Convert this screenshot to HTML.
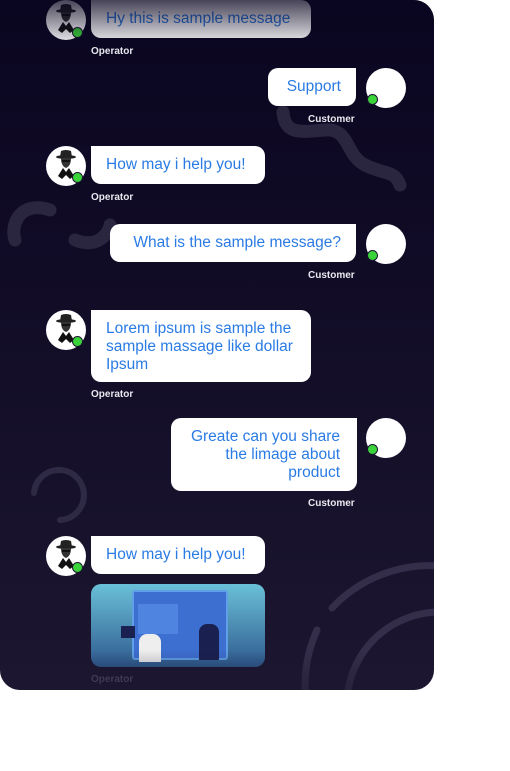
<!DOCTYPE html>
<html><head><meta charset="utf-8"><style>
*{margin:0;padding:0;box-sizing:border-box}
body{width:510px;height:771px;background:#fff;position:relative;overflow:hidden;font-family:"Liberation Sans",sans-serif}
.panel{position:absolute;left:0;top:0;width:434px;height:690px;border-radius:0 20px 20px 20px;background:linear-gradient(#0a0520,#1c1630);overflow:hidden}
.b{position:absolute;background:#fff;color:#2a7be4;font-size:15.5px;line-height:18px;padding:10px 15px;border-radius:10px;white-space:nowrap}
.op{border-top-left-radius:0}
.cu{border-top-right-radius:0;text-align:right}
.av{position:absolute;width:40px;height:40px;border-radius:50%;background:#fff;overflow:hidden}
.dot{position:absolute;width:11px;height:11px;border-radius:50%;background:#3ad33a;border:1.5px solid #1a1530}
.lb{position:absolute;color:#e8e8ee;font-size:10px;font-weight:bold}
</style></head><body>
<svg width="0" height="0" style="position:absolute"><defs>
<symbol id="man" viewBox="0 0 40 40">
<ellipse cx="20" cy="11" rx="10" ry="2" fill="#222"/>
<path d="M14 11 L15 5 Q20 3 25 5 L26 11Z" fill="#222"/>
<path d="M15 12 Q15 20 20 22 Q25 20 25 12Z" fill="#333"/>
<path d="M16 14 h8 v2 h-8z" fill="#111"/>
<path d="M12 30 L17 22 L20 26 L23 22 L28 30 L24 33 L20 29 L16 33Z" fill="#111"/>
</symbol></defs></svg>
<div class="panel">
<svg width="434" height="690" style="position:absolute;left:0;top:0" fill="none" stroke="#2b2640" stroke-width="13" stroke-linecap="round">
<path d="M283 112 C285 135 300 132 325 130 C350 128 345 155 365 165 C385 175 395 170 400 185"/>
<path d="M50 210 C20 200 10 225 15 240"/>
<path d="M75 240 C100 250 110 230 110 225"/>
<path d="M34 493 A25 25 0 1 1 60 520" stroke-width="6" stroke="#2e2944"/>
<path d="M332 608 A134 134 0 0 1 440 566" stroke-width="7" stroke="#342e4a"/>
<path d="M317 630 A134 134 0 0 0 306 700" stroke-width="7" stroke="#342e4a"/>
<path d="M347 700 A93 93 0 0 1 440 612" stroke-width="7" stroke="#342e4a"/>
</svg>

<div class="av" style="left:46px;top:0px"><svg width="40" height="40"><use href="#man"/></svg></div><div class="dot" style="left:72px;top:27px"></div>
<div class="b op" style="left:91px;top:0;width:220px;height:38px">Hy this is sample message</div>
<div class="lb" style="left:91px;top:46px">Operator</div>

<div class="b cu" style="left:268px;top:68px;width:88px;height:38px">Support</div>
<div class="av" style="left:366px;top:68px"></div><div class="dot" style="left:367px;top:94px"></div>
<div class="lb" style="left:308px;top:114px">Customer</div>

<div class="av" style="left:46px;top:146px"><svg width="40" height="40"><use href="#man"/></svg></div><div class="dot" style="left:72px;top:172px"></div>
<div class="b op" style="left:91px;top:146px;width:174px;height:38px">How may i help you!</div>
<div class="lb" style="left:91px;top:192px">Operator</div>

<div class="b cu" style="left:110px;top:224px;width:246px;height:38px">What is the sample message?</div>
<div class="av" style="left:366px;top:224px"></div><div class="dot" style="left:367px;top:250px"></div>
<div class="lb" style="left:308px;top:270px">Customer</div>

<div class="av" style="left:46px;top:310px"><svg width="40" height="40"><use href="#man"/></svg></div><div class="dot" style="left:72px;top:336px"></div>
<div class="b op" style="left:91px;top:310px;width:220px;height:72px">Lorem ipsum is sample the<br>sample massage like dollar<br>Ipsum</div>
<div class="lb" style="left:91px;top:389px">Operator</div>

<div class="b cu" style="left:171px;top:418px;width:186px;height:73px;padding-right:17px">Greate can you share<br>the limage about<br>product</div>
<div class="av" style="left:366px;top:418px"></div><div class="dot" style="left:367px;top:444px"></div>
<div class="lb" style="left:308px;top:498px">Customer</div>

<div class="av" style="left:46px;top:536px"><svg width="40" height="40"><use href="#man"/></svg></div><div class="dot" style="left:72px;top:562px"></div>
<div class="b op" style="left:91px;top:536px;width:174px;height:38px">How may i help you!</div>
<div style="position:absolute;left:91px;top:584px;width:174px;height:83px;border-radius:10px;overflow:hidden;background:linear-gradient(#6ac0d8,#2e5a8e)">
 <div style="position:absolute;left:41px;top:6px;width:96px;height:70px;background:#3d6fd0;border:2px solid #5fa0e8;border-radius:3px"></div>
 <div style="position:absolute;left:47px;top:20px;width:40px;height:30px;background:#4f85e0"></div>
 <div style="position:absolute;left:48px;top:50px;width:22px;height:28px;background:#eee;border-radius:8px 8px 0 0"></div>
 <div style="position:absolute;left:108px;top:40px;width:20px;height:36px;background:#1a2050;border-radius:8px 8px 0 0"></div>
 <div style="position:absolute;left:30px;top:42px;width:14px;height:12px;background:#1a2050"></div>
</div>
<div class="lb" style="left:91px;top:674px;color:#55506a">Operator</div>

<div style="position:absolute;left:0;top:0;width:434px;height:42px;background:linear-gradient(rgba(10,5,32,0.75),rgba(10,5,32,0.1))"></div>
<div style="position:absolute;left:0;top:650px;width:434px;height:40px;background:linear-gradient(rgba(28,22,48,0),rgba(28,22,48,0.5))"></div>
</div>
</body></html>
